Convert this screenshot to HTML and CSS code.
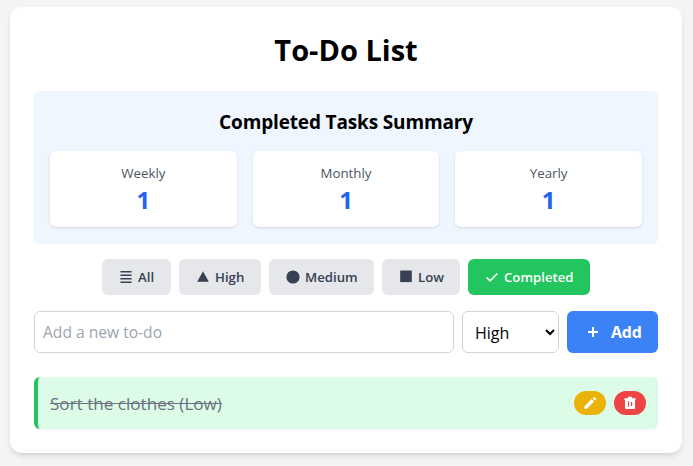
FILE: index.html
```html
<!DOCTYPE html>
<html lang="en">
<head>
<meta charset="utf-8">
<title>To-Do List</title>
<link rel="stylesheet" href="styles.css">
</head>
<body>
<main class="card">
  <h1 class="title">To-Do List</h1>
  <section class="summary">
    <h2 class="summary-title">Completed Tasks Summary</h2>
    <div class="stats">
      <div class="stat"><p class="stat-label">Weekly</p><p class="stat-value">1</p></div>
      <div class="stat"><p class="stat-label">Monthly</p><p class="stat-value">1</p></div>
      <div class="stat"><p class="stat-label">Yearly</p><p class="stat-value">1</p></div>
    </div>
  </section>
  <div class="filters">
    <button class="filter all"><svg viewBox="0 0 16 16"><path d="M2.4 2.7h11.2M2.4 6.2h11.2M2.4 9.7h11.2M2.4 13.2h11.2" stroke="currentColor" stroke-width="1.6"/></svg><span>All</span></button>
    <button class="filter high"><svg viewBox="0 0 16 16"><path d="M8 2.2 13.8 12.8H2.2z" fill="currentColor"/></svg><span>High</span></button>
    <button class="filter medium"><svg viewBox="0 0 16 16"><circle cx="8" cy="8" r="6.6" fill="currentColor"/></svg><span>Medium</span></button>
    <button class="filter low"><svg viewBox="0 0 16 16"><path d="M2.2 1.5h11.6v11.6H2.2z" fill="currentColor"/></svg><span>Low</span></button>
    <button class="filter completed"><svg viewBox="0 0 16 16"><path d="m2.5 8.5 3.6 3.3 7.2-7.3" fill="none" stroke="currentColor" stroke-width="1.6"/></svg><span>Completed</span></button>
  </div>
  <form class="form">
    <input class="field" type="text" placeholder="Add a new to-do">
    <select class="priority"><option>High</option><option>Medium</option><option>Low</option></select>
    <button class="add" type="button"><svg viewBox="0 0 16 16"><path d="M8 3v10M3 8h10" stroke="currentColor" stroke-width="2"/></svg><span>Add</span></button>
  </form>
  <ul class="list">
    <li class="item">
      <span class="item-text">Sort the clothes (Low)</span>
      <button class="action edit" aria-label="Edit"><svg viewBox="0 0 16 16"><path d="M2.4 13.8v-2.5l7.3-7.2 2.4 2.4-7.2 7.3zM10.6 3.2l1-1q.5-.4 1 0l1.4 1.4q.4.5 0 1l-1 1z" fill="currentColor"/></svg></button>
      <button class="action delete" aria-label="Delete"><svg viewBox="0 0 16 16"><path fill-rule="evenodd" d="M2.4 3.2h3.4V2.5q0-.8.8-.8h2.8q.8 0 .8.8v.7h3.4v1.6H13v8q0 1.2-1.2 1.2H4.200Q3 14 3 12.800v-8h-.6zM6 6.200v5.600h1.100V6.200zM8.900 6.900v4.200h1.300V6.900z" fill="currentColor"/></svg></button>
    </li>
  </ul>
</main>
</body>
</html>
```
FILE: styles.css
```css
* { box-sizing: border-box; }
body {
  margin: 0;
  padding: 7px 11px 0 10px;
  height: 466px;
  overflow: hidden;
  background: #f3f4f6;
  font-family: "Open Sans", "Noto Sans", sans-serif;
  font-size: 16px;
  line-height: 24px;
  color: #000;
}
h1, h2, p, ul { margin: 0; padding: 0; }
button, input, select { font: inherit; margin: 0; }
button { border: 0; display: flex; align-items: center; }
svg { display: block; width: 16px; height: 16px; flex: none; }
.card {
  width: 672px;
  height: 446px;
  padding: 24px;
  background: #fff;
  border-radius: 12px;
  box-shadow: 0 4px 6px -1px rgba(0,0,0,.1), 0 2px 4px -2px rgba(0,0,0,.1);
}
.title {
  height: 36px;
  margin-bottom: 24px;
  text-align: center;
  font-size: 29px;
  line-height: 38px;
  font-weight: 700;
}
.summary {
  height: 152px;
  padding: 16px;
  margin-bottom: 16px;
  background: #eff6ff;
  border-radius: 6px;
  box-shadow: 0 1px 2px rgba(0,0,0,.05);
}
.summary-title {
  height: 28px;
  margin-bottom: 16px;
  text-align: center;
  font-size: 19px;
  line-height: 31px;
  font-weight: 700;
  letter-spacing: -0.15px;
}
.stats { display: grid; grid-template-columns: repeat(3, 1fr); gap: 16px; }
.stat {
  height: 76px;
  padding: 12px;
  text-align: center;
  background: #fff;
  border-radius: 6px;
  box-shadow: 0 1px 3px rgba(0,0,0,.1), 0 1px 2px -1px rgba(0,0,0,.1);
}
.stat-label { font-size: 13.3px; line-height: 20px; color: #4b5563; }
.stat-value { font-size: 24px; line-height: 34px; font-weight: 700; color: #2563eb; }
.filters { display: flex; justify-content: center; gap: 8px; margin-bottom: 16px; }
.filter {
  height: 36px;
  padding: 0 16px;
  gap: 4px;
  border-radius: 6px;
  background: #e5e7eb;
  color: #374151;
  font-size: 13.2px;
  line-height: 20px;
  font-weight: 600;
  white-space: nowrap;
}
.all { width: 69px; }
.high { width: 82px; }
.medium { width: 105px; }
.low { width: 78px; }
.completed { width: 122px; background: #22c55e; color: #fff; }
.form { display: flex; gap: 8px; height: 42px; margin-bottom: 24px; }
.field {
  flex: 1;
  min-width: 0;
  padding: 8px;
  border: 1px solid #d1d5db;
  border-radius: 6px;
  background: #fff;
  font-size: 15.6px;
}
.field::placeholder { color: #9ca3af; opacity: 1; }
.priority {
  width: 97px;
  padding: 2px 8px 0;
  border: 1px solid #d1d5db;
  border-radius: 6px;
  background: #fff;
  color: #000;
}
.add {
  width: 91px;
  padding: 0 16px 0 18px;
  gap: 10px;
  border-radius: 6px;
  background: #3b82f6;
  color: #fff;
  font-weight: 700;
  letter-spacing: -0.2px;
}
.list { list-style: none; }
.item {
  display: flex;
  align-items: center;
  gap: 8px;
  height: 52px;
  padding: 0 12px;
  border-left: 4px solid #22c55e;
  border-radius: 6px;
  background: #dcfce7;
  box-shadow: 0 1px 2px rgba(0,0,0,.05);
}
.item-text {
  flex: 1;
  padding-top: 1px;
  font-size: 17.1px;
  line-height: 28px;
  color: #6b7280;
  text-decoration: line-through;
}
.action {
  justify-content: center;
  width: 32px;
  height: 24px;
  padding: 0;
  border-radius: 12px;
  color: #fff;
}
.edit { background: #eab308; }
.delete { background: #ef4444; }
```
